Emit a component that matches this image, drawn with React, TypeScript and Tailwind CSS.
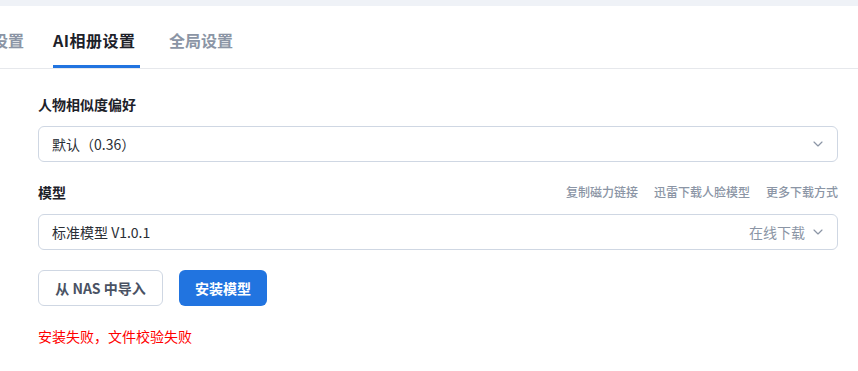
import { ChevronDown } from 'lucide-react';

const font = { fontFamily: '"Noto Sans CJK SC", "Noto Sans", sans-serif' };

function Select({ value, hint }: { value: string; hint?: string }) {
  return (
    <div className="flex h-9 items-center rounded-md border border-[#cfd7e3] bg-white pl-[13px] pr-[11px]">
      <span className="flex-1 text-sm text-[#2b2f36]">{value}</span>
      {hint && <span className="mr-[5px] text-sm text-[#8b95a5]">{hint}</span>}
      <ChevronDown className="h-4 w-4 text-[#8b95a5]" strokeWidth={1.75} />
    </div>
  );
}

export default function App() {
  const tabs = ['基础设置', 'AI相册设置', '全局设置'];
  return (
    <div className="h-[371px] w-[858px] overflow-hidden bg-white" style={font}>
      <div className="h-[6px] bg-[#eff2f7]" />

      {/* Tabs */}
      <div className="flex h-[63px] border-b border-[#e6e8ec]">
        <div className="ml-[-40px] flex gap-[29px]">
          {tabs.map((t, i) => (
            <div
              key={t}
              className={`flex items-center border-b-[3px] pt-[8px] text-base font-bold ${
                i === 1 ? 'w-[87px] border-[#2174e0] tracking-[0.5px] text-[#1d2129]' : 'border-transparent text-[#8b95a5]'
              }`}
            >
              {t}
            </div>
          ))}
        </div>
      </div>

      <div className="pl-[38px] pr-[20px] pt-[25px]">
        <div className="mb-3 text-sm font-bold leading-5 text-[#1d2129]">人物相似度偏好</div>
        <Select value="默认（0.36）" />

        <div className="mb-3 mt-5 flex items-center justify-between leading-5">
          <span className="text-sm font-bold text-[#1d2129]">模型</span>
          <div className="flex gap-4 text-xs font-medium text-[#8b95a5]">
            <span>复制磁力链接</span>
            <span>迅雷下载人脸模型</span>
            <span>更多下载方式</span>
          </div>
        </div>
        <Select value="标准模型 V1.0.1" hint="在线下载" />

        <div className="mt-5 flex gap-4">
          <button className="h-9 w-[125px] rounded-md border border-[#cfd7e3] bg-white text-sm font-bold text-[#4a5263]">
            从 NAS 中导入
          </button>
          <button className="h-9 w-[88px] rounded-md bg-[#2174e0] text-sm font-bold text-white">
            安装模型
          </button>
        </div>

        <div className="mt-5 text-sm leading-5 text-[#ff0000]">安装失败，文件校验失败</div>
      </div>
    </div>
  );
}
